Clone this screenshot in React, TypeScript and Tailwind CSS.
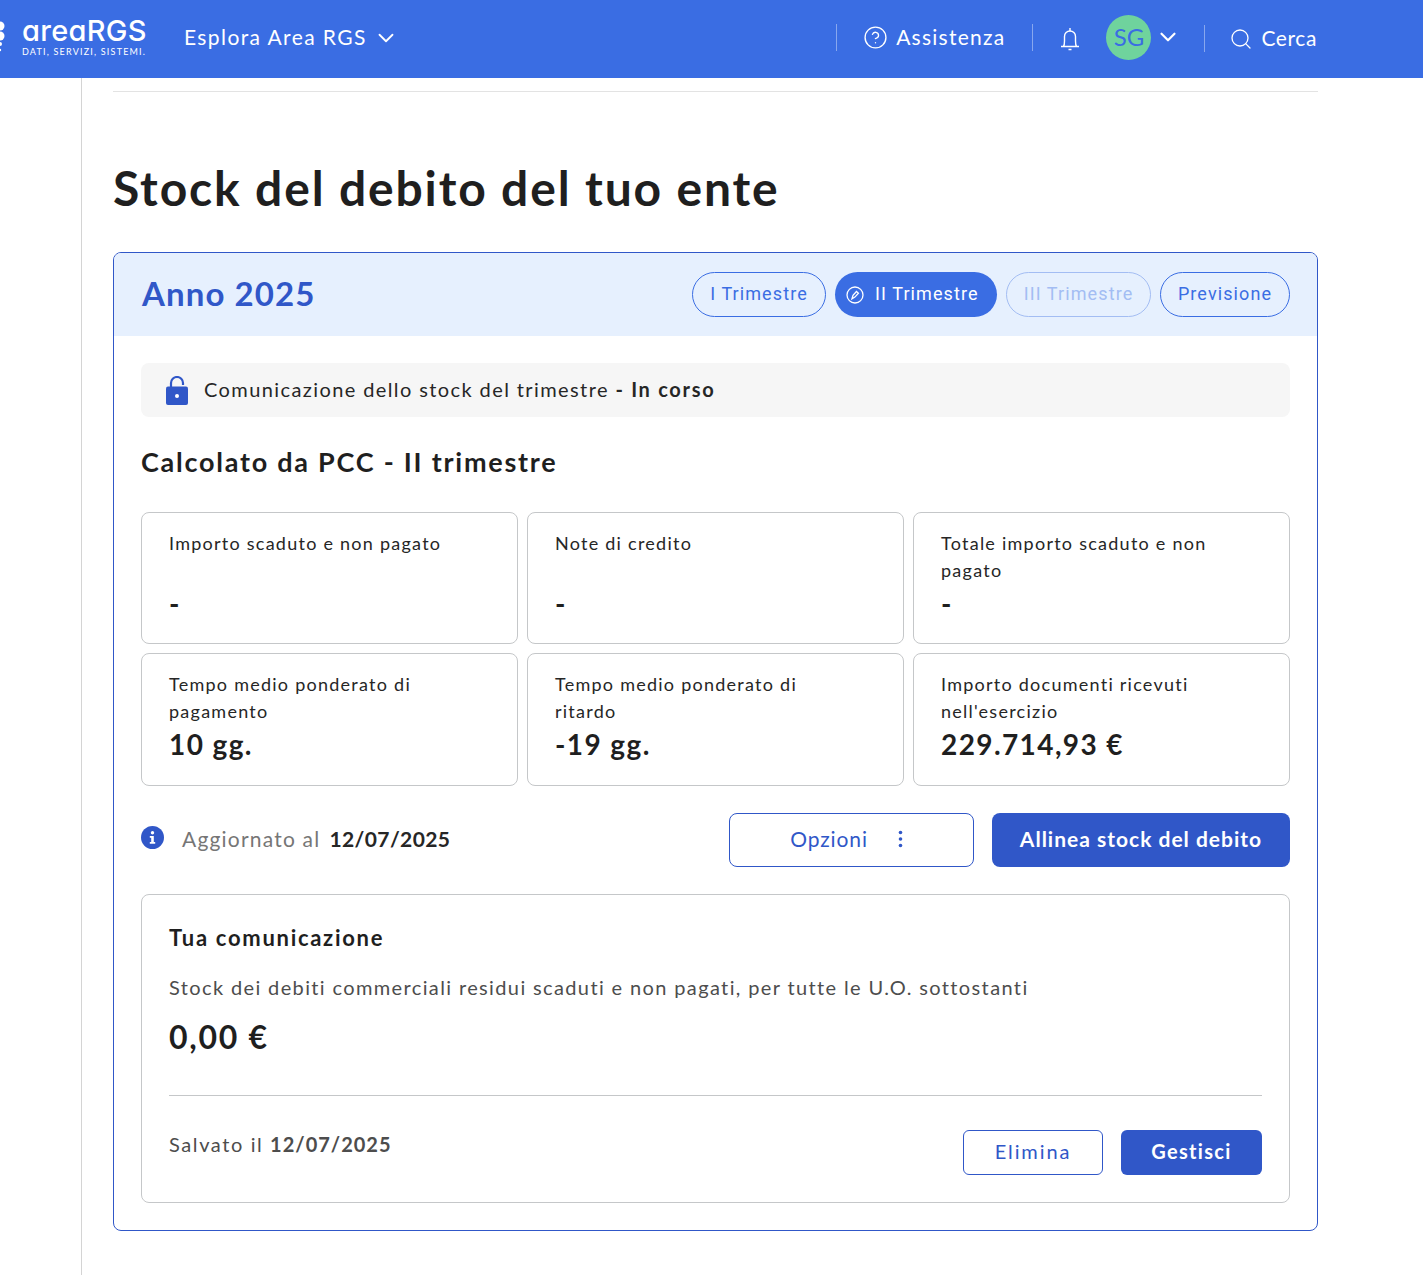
import { ChevronDown, CircleHelp, Search } from "lucide-react";

function Pill({ label, active, disabled, width }: { label: string; active?: boolean; disabled?: boolean; width: string }) {
  if (active) {
    return (
      <div className={`${width} h-[45px] pl-[11px] rounded-full bg-[#3a6de3] text-white flex items-center gap-[11px] text-[18px] tracking-[1.1px] font-['Roboto',sans-serif]`}>
        <svg width="18" height="18" viewBox="0 0 18 18" fill="none" stroke="white" strokeWidth="1.3">
          <circle cx="9" cy="9" r="8" />
          <path d="M6 12.8l1-3.4 3.5-3.9 1.9 1.7-3.5 3.9z" />
        </svg>
        <span className="pb-[2px]">{label}</span>
      </div>
    );
  }
  return (
    <div
      className={
        disabled
          ? `${width} h-[45px] pb-[2px] rounded-full border border-[#a3bdf3] text-[#a3bdf3] flex items-center justify-center text-[18px] tracking-[1.1px] font-['Roboto',sans-serif]`
          : `${width} h-[45px] pb-[2px] rounded-full border border-[#3a6de3] text-[#3a6de3] flex items-center justify-center text-[18px] tracking-[1.1px] font-['Roboto',sans-serif]`
      }
    >
      {label}
    </div>
  );
}

function StatCard({ label, value }: { label: string; value: string }) {
  return (
    <div className="h-full border border-[#c5c7c9] rounded-lg px-[27px] pt-[17px] flex flex-col">
      <div className="text-[18px] leading-[27px] tracking-[1.25px] text-[#262626] h-[55px] max-w-[300px]">{label}</div>
      <div className="text-[28px] leading-[36px] font-bold text-[#1f1f1f] tracking-[1.4px]">{value}</div>
    </div>
  );
}

export default function App() {
  return (
    <div className="min-h-screen bg-white flex flex-col font-['Lato',sans-serif] text-[#1f1f1f]">
      {/* Top bar */}
      <header className="h-[78px] bg-[#3a6de3] text-white flex items-center shrink-0">
        <svg width="5" height="34" viewBox="0 0 5 34" className="shrink-0 -mt-[2px]" fill="white">
          <circle cx="0" cy="5" r="4.5" />
          <circle cx="0" cy="15" r="4.5" />
          <circle cx="0" cy="23" r="2" />
          <circle cx="0" cy="29" r="1.2" />
        </svg>
        <div className="ml-[17px] w-[162px] shrink-0 -mt-[5px]">
          <div className="text-[29px] leading-[28px] font-['Inter',sans-serif] font-medium tracking-[0.3px] [font-feature-settings:'cv11']">areaRGS</div>
          <div className="text-[9px] leading-[10px] tracking-[1.2px] mt-[2px] whitespace-nowrap">DATI, SERVIZI, SISTEMI.</div>
        </div>
        <div className="flex items-center gap-[6px] text-[21px] tracking-[1.4px] -mt-[5px]">
          Esplora Area RGS <ChevronDown size={26} strokeWidth={1.7} className="mt-[2px]" />
        </div>
        <div className="ml-auto mr-[106px] flex items-center -mt-[3px]">
          <div className="w-px h-[27px] bg-white/40" />
          <CircleHelp size={25} strokeWidth={1.3} className="ml-[26px]" />
          <span className="ml-[8px] -mt-[1px] text-[21px] tracking-[1.25px]">Assistenza</span>
          <div className="w-px h-[27px] bg-white/40 ml-[27px]" />
          <svg width="20" height="24" viewBox="0 0 20 24" fill="none" stroke="white" strokeWidth="1.4" className="ml-[27px] mt-[2px]">
            <path d="M1 19.5h18M3.5 19.5c1-1.5 1-3 1-5.5V9.5a5.5 5.5 0 0 1 11 0V14c0 2.5 0 4 1 5.5" />
            <path d="M10 1v3M8.5 22.5h3" />
          </svg>
          <div className="w-[45px] h-[45px] pb-[2px] rounded-full bg-[#6fd39d] text-[#3a6de3] flex items-center justify-center text-[24px] ml-[26px]">SG</div>
          <ChevronDown size={26} strokeWidth={2} className="ml-[4px] -mt-[1px]" />
          <div className="w-px h-[27px] bg-white/40 ml-[23px] mt-[1px]" />
          <Search size={24} strokeWidth={1.3} className="ml-[24px] mt-[3px]" />
          <span className="ml-[8px] text-[21px] tracking-[0.6px]">Cerca</span>
        </div>
      </header>

      <div className="flex flex-1">
        <aside className="w-[82px] border-r border-[#d4d4d4] shrink-0" />
        <main className="pl-[31px] w-[1236px] pb-[44px]">
          <div className="border-t border-[#e3e3e3] mt-[13px]" />
          <h1 className="mt-[66px] text-[48px] leading-[60px] font-bold tracking-[1.85px] text-[#1f1f1f]">Stock del debito del tuo ente</h1>

          <section className="mt-[34px] border border-[#3057c8] rounded-lg overflow-hidden">
            <div className="h-[83px] bg-[#e6f0fe] flex items-center pl-[28px] pr-[27px]">
              <h2 className="text-[33px] pb-[2px] font-bold text-[#3057c8] tracking-[1.1px]">Anno 2025</h2>
              <div className="ml-auto flex gap-[9px]">
                <Pill label="I Trimestre" width="w-[134px]" />
                <Pill label="II Trimestre" width="w-[162px]" active />
                <Pill label="III Trimestre" width="w-[145px]" disabled />
                <Pill label="Previsione" width="w-[130px]" />
              </div>
            </div>

            <div className="px-[27px] pt-[27px] pb-[27px]">
              <div className="h-[54px] bg-[#f6f6f6] rounded-lg flex items-center px-[25px] text-[20px] tracking-[1.4px] text-[#262626]">
                <svg width="22" height="29" viewBox="0 0 22 29" className="mr-[16px] shrink-0">
                  <path d="M5 12V7a6 6 0 0 1 12 0V9" fill="none" stroke="#3057c8" strokeWidth="2.2" />
                  <rect x="0" y="10.5" width="22" height="18.5" rx="2" fill="#3057c8" />
                  <circle cx="11" cy="20" r="2" fill="white" />
                </svg>
                <span className="pb-[3px]">
                  Comunicazione dello stock del trimestre&nbsp;<b className="tracking-[1.7px]">- In corso</b>
                </span>
              </div>

              <h3 className="mt-[26px] text-[27px] leading-[38px] font-bold tracking-[1.75px]">Calcolato da PCC - II trimestre</h3>

              <div className="mt-[31px] grid grid-cols-3 gap-[9px] grid-rows-[132px_133px]">
                <StatCard label="Importo scaduto e non pagato" value="-" />
                <StatCard label="Note di credito" value="-" />
                <StatCard label="Totale importo scaduto e non pagato" value="-" />
                <StatCard label="Tempo medio ponderato di pagamento" value="10 gg." />
                <StatCard label="Tempo medio ponderato di ritardo" value="-19 gg." />
                <StatCard label="Importo documenti ricevuti nell'esercizio" value="229.714,93 €" />
              </div>

              <div className="mt-[27px] flex items-center">
                <svg width="23" height="23" viewBox="0 0 23 23" className="-mt-[5px]">
                  <circle cx="11.5" cy="11.5" r="11.5" fill="#3057c8" />
                  <circle cx="11.5" cy="6.8" r="1.7" fill="white" />
                  <path d="M8.8 10h4v6h1.4v1.8H8.8V16h1.4v-4.2H8.8z" fill="white" />
                </svg>
                <span className="ml-[18px] pb-[2px] text-[21px] tracking-[1.2px] text-[#767676]">Aggiornato al</span>
                <span className="ml-[9px] pb-[2px] text-[21px] font-bold tracking-[0.4px] text-[#262626]">12/07/2025</span>
                <button className="ml-auto w-[245px] h-[54px] pr-[10px] pb-[2px] border border-[#3057c8] rounded-lg text-[#3057c8] text-[21px] tracking-[0.9px] flex items-center justify-center gap-[30px]">
                  Opzioni
                  <svg width="5" height="18" viewBox="0 0 5 18" fill="#3057c8">
                    <circle cx="2.5" cy="2.5" r="1.8" />
                    <circle cx="2.5" cy="9" r="1.8" />
                    <circle cx="2.5" cy="15.5" r="1.8" />
                  </svg>
                </button>
                <button className="ml-[18px] w-[298px] h-[54px] pb-[2px] rounded-lg bg-[#3057c8] text-white text-[21px] font-bold tracking-[1px]">
                  Allinea stock del debito
                </button>
              </div>

              <div className="mt-[27px] border border-[#c5c7c9] rounded-lg px-[27px] pt-[27px] h-[309px]">
                <h4 className="text-[22px] leading-[32px] font-bold tracking-[1.7px]">Tua comunicazione</h4>
                <p className="mt-[17px] text-[20px] leading-[32px] tracking-[1.37px] text-[#4d4d4d]">
                  Stock dei debiti commerciali residui scaduti e non pagati, per tutte le U.O. sottostanti
                </p>
                <div className="mt-[12px] text-[32px] leading-[44px] font-bold tracking-[1.7px]">0,00 €</div>
                <div className="mt-[36px] border-t border-[#c5c7c9]" />
                <div className="mt-[34px] flex items-start">
                  <span className="-mt-[1px] text-[20px] tracking-[1.6px] text-[#4d4d4d]">
                    Salvato il <b className="tracking-[1px]">12/07/2025</b>
                  </span>
                  <button className="ml-auto w-[140px] h-[45px] pb-[4px] border border-[#3057c8] rounded-md text-[#3057c8] text-[20px] tracking-[1.9px]">Elimina</button>
                  <button className="ml-[18px] w-[141px] h-[45px] pb-[4px] rounded-md bg-[#3057c8] text-white text-[20px] font-bold tracking-[1.3px]">Gestisci</button>
                </div>
              </div>
            </div>
          </section>
        </main>
      </div>
    </div>
  );
}
